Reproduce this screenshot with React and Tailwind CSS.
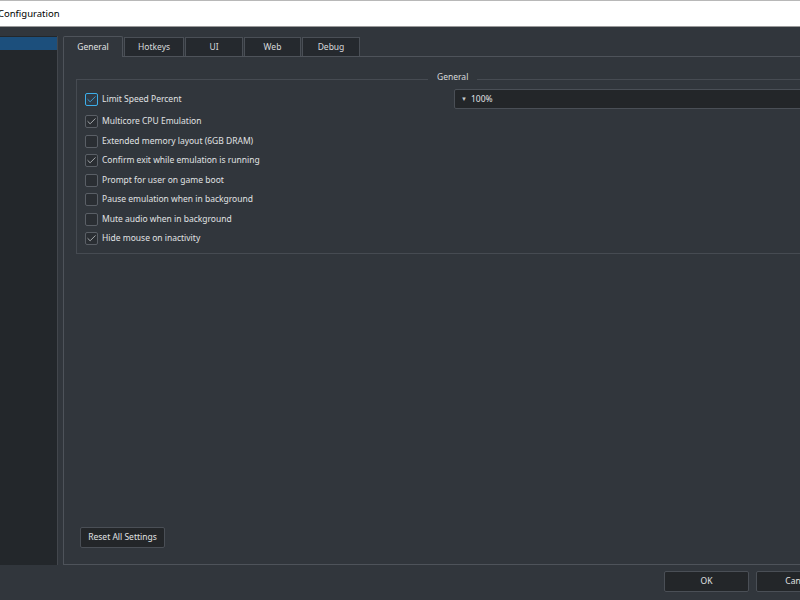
import { Check } from "lucide-react";

const font = { fontFamily: '"Noto Sans", "Open Sans", sans-serif' };

const tabs = [
  { name: "General", w: "w-[60px]" },
  { name: "Hotkeys", w: "w-[60px]" },
  { name: "UI", w: "w-[58px]" },
  { name: "Web", w: "w-[57px]" },
  { name: "Debug", w: "w-[58px]" },
];

const options = [
  { label: "Multicore CPU Emulation", checked: true },
  { label: "Extended memory layout (6GB DRAM)", checked: false },
  { label: "Confirm exit while emulation is running", checked: true },
  { label: "Prompt for user on game boot", checked: false },
  { label: "Pause emulation when in background", checked: false },
  { label: "Mute audio when in background", checked: false },
  { label: "Hide mouse on inactivity", checked: true },
];

function Box({ checked, focused }) {
  return (
    <span
      className={
        "flex items-center justify-center w-[13px] h-[13px] rounded-[2px] border " +
        (focused ? "border-[#3daee9] bg-[#2f3a45]" : "border-[#5a5f66] bg-[#2a2e33]")
      }
    >
      {checked && (
        <Check
          size={11}
          strokeWidth={1.8}
          className={focused ? "text-[#3daee9]" : "text-[#bfc2c5]"}
        />
      )}
    </span>
  );
}

export default function App() {
  return (
    <div
      className="w-[800px] h-[600px] overflow-hidden bg-[#31363c] flex flex-col text-[8.5px] text-[#e0e2e4] whitespace-nowrap"
      style={font}
    >
      {/* window title */}
      <div className="h-[27px] shrink-0 bg-white border-t border-[#b8b8b8] border-b border-b-[#9a9a9a] flex items-center pt-[2px]">
        <span className="ml-[-2px] text-[9.5px] text-black">Configuration</span>
      </div>

      <div className="flex pt-[9px]">
        {/* side list */}
        <div className="w-[58px] h-[529px] shrink-0 bg-[#23272b] border-r border-[#43474d] pt-[1px]">
          <div className="h-[13px] bg-[#1c4f7c]" />
        </div>

        {/* tab widget */}
        <div className="ml-[5px] w-[790px] shrink-0 flex flex-col">
          <div className="flex h-[20px] items-end">
            {tabs.map((t, i) =>
              i === 0 ? (
                <div
                  key={t.name}
                  className={`${t.w} h-[21px] mb-[-1px] z-10 bg-[#31363c] border border-b-0 border-[#4e535a] rounded-t-[2px] flex items-center justify-center`}
                >
                  {t.name}
                </div>
              ) : (
                <div
                  key={t.name}
                  className={`${t.w} h-[19px] bg-[#25292e] border border-b-0 border-[#4a4f56] ml-[1px] flex items-center justify-center text-[#d8dadc]`}
                >
                  {t.name}
                </div>
              )
            )}
          </div>

          <div className="h-[509px] border border-[#4e535a] flex flex-col px-[12px] pt-[22px] pb-[16px]">
            {/* group box */}
            <div className="relative border border-[#464b52] pl-[8px] pt-[9px] pb-[4px]">
              <span className="absolute top-[-9px] left-[351px] px-[9px] bg-[#31363c] text-[#d8dadc]">
                General
              </span>

              <div className="flex items-center h-[20px]">
                <div className="flex items-center gap-[4px] w-[369px]">
                  <Box checked focused />
                  <span>Limit Speed Percent</span>
                </div>
                <div className="flex-1 h-[20px] bg-[#232629] border border-[#4a4f56] rounded-[2px] flex items-center pl-[6px] gap-[4px]">
                  <span className="text-[6px] text-[#c8cacc]">▼</span>
                  <span>100%</span>
                </div>
              </div>

              <div className="flex flex-col mt-[3px]">
                {options.map((o) => (
                  <div key={o.label} className="h-[19.5px] flex items-center gap-[4px]">
                    <Box checked={o.checked} />
                    <span>{o.label}</span>
                  </div>
                ))}
              </div>
            </div>

            <div className="flex-1" />

            <button className="self-start ml-[4px] w-[85px] h-[21px] bg-[#232629] border border-[#4a4f56] rounded-[2px] text-[#e0e2e4]">
              Reset All Settings
            </button>
          </div>
        </div>
      </div>

      {/* dialog buttons */}
      <div className="flex pl-[664px] pt-[6px] gap-[7px]">
        <button className="w-[85px] h-[21px] shrink-0 bg-[#232629] border border-[#4a4f56] rounded-[2px]">
          OK
        </button>
        <button className="w-[85px] h-[21px] shrink-0 bg-[#232629] border border-[#4a4f56] rounded-[2px]">
          Cancel
        </button>
      </div>
    </div>
  );
}
